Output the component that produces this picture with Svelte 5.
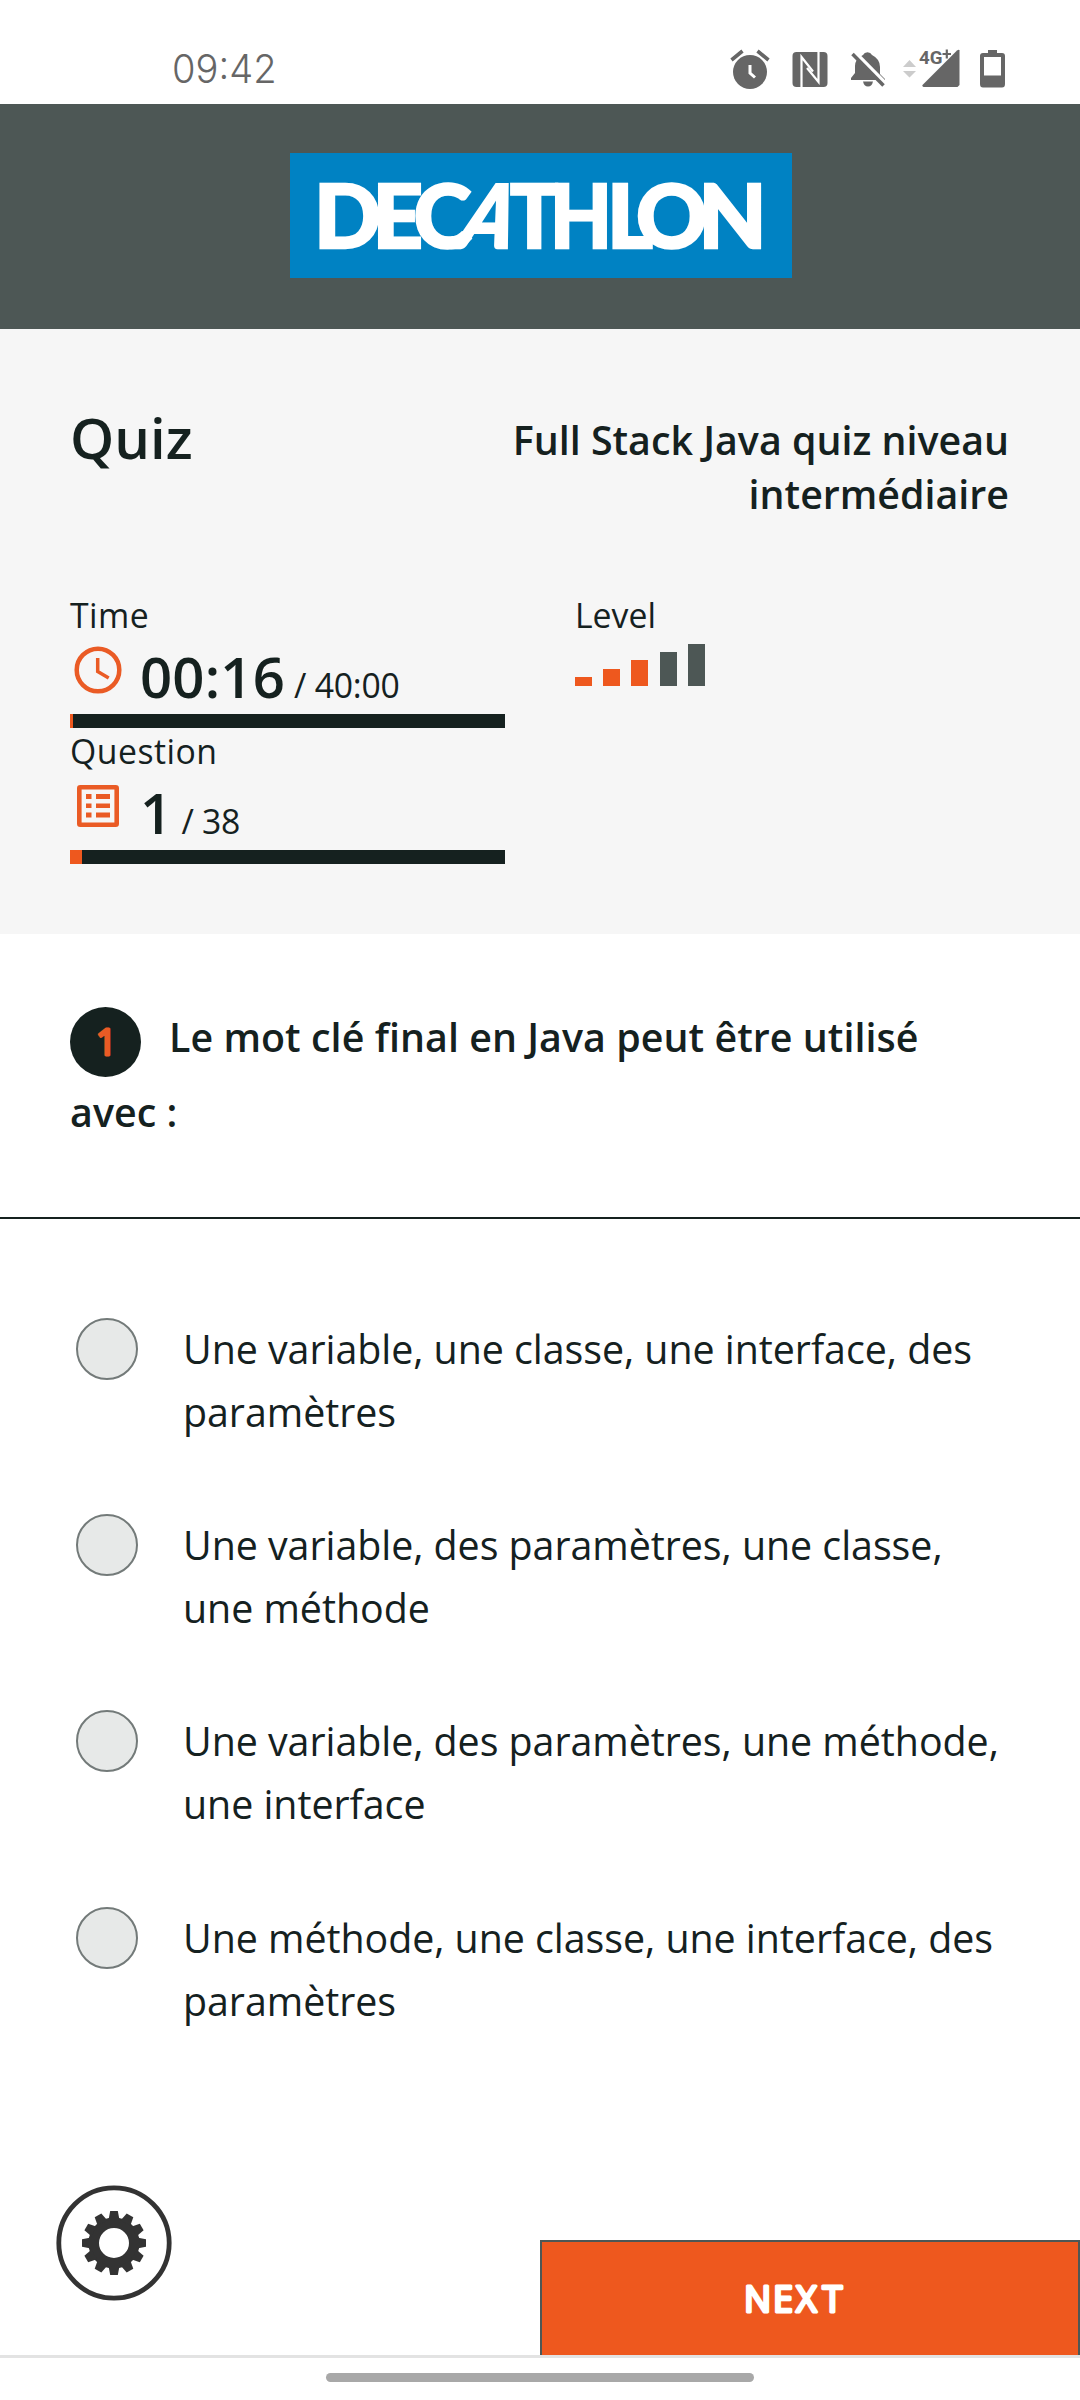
<script>
  const answers = [
    ['Une variable, une classe, une interface, des', 'paramètres'],
    ['Une variable, des paramètres, une classe,', 'une méthode'],
    ['Une variable, des paramètres, une méthode,', 'une interface'],
    ['Une méthode, une classe, une interface, des', 'paramètres'],
  ];
  const levels = [9, 17, 26, 34, 42];
  const teeth = Array.from({ length: 12 }, (_, i) => i * 30);
</script>

<div class="screen">
  <div class="status">
    <svg width="1080" height="104" viewBox="0 0 1080 104" fill="#666">
      <text class="clock" x="172" y="83" textLength="104.500" lengthAdjust="spacingAndGlyphs">09:42</text>
      <g>
        <circle cx="750" cy="72" r="17" />
        <path d="M731.5 60 742.500 51M757.500 51 768.500 60" stroke="#666" stroke-width="3.600" />
        <path d="M750 65v8l5 4.500" fill="none" stroke="#fff" stroke-width="3" />
      </g>
      <g>
        <rect x="792.500" y="52" width="35" height="35" rx="4" />
        <path d="M801.500 87V57L813 71.500M818.500 52V82L807 68" fill="none" stroke="#fff" stroke-width="2.200" />
      </g>
      <g>
        <path d="M851 80v-2l4-5V66q0-7 8-11a5 5 0 0 1 9 0q8 4 8 12v7l5 5v1Z" />
        <path d="M863 81.500h10q-1 5-5 5t-5-5Z" />
        <path d="M855 52.500 886 84" stroke="#fff" stroke-width="4" />
        <path d="M852.500 54 883.500 85.500" stroke="#666" stroke-width="3.500" />
      </g>
      <path d="m909.500 60 6.500 7h-13ZM903 71h13l-6.500 6.500Z" fill="#ccc" />
      <text class="net" x="919" y="64" textLength="23.500" lengthAdjust="spacingAndGlyphs">4G</text>
      <path d="M942.500 54h8.500M946.800 49.500v9" stroke="#666" stroke-width="2.200" />
      <path d="M957 50.500q2-1.500 2.500 0V85l-2 2h-34q-2-1-1-2Z" />
      <path fill-rule="evenodd" d="M988 50h9v3h5q3 0 3 3v28q0 3.500-3 3.500h-19q-3 0-3-3.500V56q0-3 3-3h5ZM984 57v18.500h17V57Z" />
    </svg>
  </div>

  <header>
    <svg class="logo" width="502" height="125" viewBox="290 153 502 125">
      <text x="314 372.500 413.500" y="248">DEC</text>
      <text transform="translate(453 248) scale(.86 1) skewX(-22)">A</text>
      <text transform="translate(510 248) scale(.91 1)" x="0 44" y="0">TH</text>
      <text x="607 636 698.500" y="248">LON</text>
    </svg>
  </header>

  <section class="info">
    <div class="titles">
      <h1>Quiz</h1>
      <h2>Full Stack Java quiz niveau<br />intermédiaire</h2>
    </div>
    <div class="stats">
      <div class="meters">
        <div class="label">Time</div>
        <div class="value">
          <svg width="70" height="60" viewBox="0 0 70 60" fill="none" stroke="#ea5b25">
            <circle cx="28" cy="27" r="21.300" stroke-width="4.500" />
            <path d="M27.700 15v13.500l11 6.500" stroke-width="3.500" />
          </svg>
          <b>00:16</b><span>/ 40:00</span>
        </div>
        <div class="bar"><i class="t"></i></div>
        <div class="label">Question</div>
        <div class="value">
          <svg width="70" height="60" viewBox="0 0 70 60">
            <rect x="9.300" y="8.300" width="37.400" height="37.400" rx="1" fill="none" stroke="#ea5b25" stroke-width="4.600" />
            <path fill="#ea5b25" d="M16 15h5.500v5H16zm10 0h14v5H26zM16 24.500h5.500v4.500H16zm10 0h14v4.500H26zM16 33.500h5.500v5H16zm10 0h14v5H26z" />
          </svg>
          <b>1</b><span>/ 38</span>
        </div>
        <div class="bar"><i class="q"></i></div>
      </div>
      <div class="level">
        <div class="label tight">Level</div>
        <div class="bars">
          {#each levels as h, i}<i class:on={i < 3} style:height="{h}px"></i>{/each}
        </div>
      </div>
    </div>
  </section>

  <section class="question">
    <svg class="badge" width="71" height="70" viewBox="0 0 71 70">
      <ellipse cx="35.500" cy="35" rx="35.500" ry="35" fill="#15211f" />
      <text class="round orange" x="26" y="47.500">1</text>
    </svg><span>Le mot clé final en Java peut être utilisé</span><br />avec :
  </section>

  <section class="answers">
    {#each answers as [a, b]}
      <div class="answer">
        <i></i>
        <p>{a}<br />{b}</p>
      </div>
    {/each}
  </section>

  <footer>
    <svg class="gear" width="116" height="116" viewBox="-58 -58 116 116">
      <circle r="55.200" fill="#fff" stroke="#333" stroke-width="4.800" />
      <circle r="20.300" fill="none" stroke="#333" stroke-width="10.600" />
      {#each teeth as a}
        <path d="M-5.500-23-3.800-32H3.800L5.500-23Z" fill="#333" transform="rotate({a})" />
      {/each}
    </svg>
    <div class="next">
      <svg width="110" height="50" viewBox="0 0 110 50">
        <text class="round" x="3 32 55 81.500" y="38">NEXT</text>
      </svg>
    </div>
  </footer>
  <div class="nav"><i></i></div>
</div>

<style>
  :global(body) { background: #fff; }
  .screen { width: 1080px; height: 2400px; display: flex; flex-direction: column; background: #fff; color: #15211f; font-family: 'Open Sans', sans-serif; font-size: 39.375px; overflow: hidden; }
  svg { display: block; flex: none; }
  .status { height: 104px; }
  .clock { font: 300 40px Inter, sans-serif; }
  .net { font: 700 19px Roboto, sans-serif; }
  header { height: 225px; background: #4d5755; display: flex; align-items: center; justify-content: center; padding: 0 0 2px 1px; box-sizing: border-box; }
  .logo { background: #0082c3; fill: #fff; stroke: #fff; stroke-width: 2.400px; font: 900 88px Lato, sans-serif; }
  .info { height: 605px; background: #f6f6f6; box-sizing: border-box; padding: 70px 71px 0 70px; }
  .titles { display: flex; justify-content: space-between; height: 187px; }
  h1, h2, p { margin: 0; }
  h1 { font-size: 56.25px; line-height: 76px; font-weight: 600; }
  h2 { font-size: 39.375px; line-height: 54px; font-weight: 600; text-align: right; padding-top: 14px; }
  .stats { display: flex; gap: 70px; }
  .meters { width: 435px; }
  .label { font-size: 33.75px; line-height: 58px; height: 58px; letter-spacing: .5px; }
  .tight { letter-spacing: 0; }
  .value { height: 70px; display: flex; align-items: baseline; line-height: 64px; }
  .value svg { align-self: flex-start; margin-top: -1px; }
  .value b { font-size: 56.25px; font-weight: 600; letter-spacing: .2px; }
  .value span { font-size: 33.75px; margin-left: 9px; letter-spacing: -.25px; }
  .bar { height: 14px; background: #15211f; margin-bottom: -6px; }
  .bar i { display: block; height: 14px; background: #ee581e; }
  .bar .t { width: 3px; }
  .bar .q { width: 12px; }
  .bars { display: flex; align-items: flex-end; gap: 11.200px; height: 42px; }
  .bars i { width: 17px; background: #4d5755; }
  .bars .on { background: #ee581e; }
  .question { height: 285px; box-sizing: border-box; border-bottom: 2px solid #15211f; padding: 68px 70px 0; font-weight: 600; line-height: 70px; letter-spacing: .05px; }
  .badge { display: inline-block; vertical-align: -25px; height: 70px; margin: 0 28px 0 0; }
  .round { font: 400 36px 'Open Sans', sans-serif; fill: #fff; stroke: #fff; stroke-width: 3px; stroke-linejoin: round; }
  .orange { fill: #ea5b25; stroke: #ea5b25; }
  .answers { padding: 99px 0 0 76px; display: flex; flex-direction: column; gap: 70.200px; flex: 1; }
  .answer { display: flex; height: 126px; line-height: 63px; white-space: nowrap; letter-spacing: -.04px; }
  .answer i { width: 58px; height: 58px; flex: none; border: 2px solid #737a79; border-radius: 50%; background: #e7e9e8; margin-right: 45px; }
  footer { height: 170px; display: flex; justify-content: space-between; align-items: flex-end; padding-left: 56px; }
  .gear { align-self: flex-start; }
  .next { width: 540px; height: 115px; box-sizing: border-box; background: #ee581e; border: 2px solid #4d5755; border-bottom: 0; display: flex; align-items: center; justify-content: center; padding-right: 28px; }
  .nav { height: 45px; box-sizing: border-box; border-top: 3px solid #e3e3e3; padding-top: 15px; }
  .nav i { display: block; width: 428px; height: 9px; border-radius: 5px; background: #a8a8a8; margin: 0 auto; }
</style>
